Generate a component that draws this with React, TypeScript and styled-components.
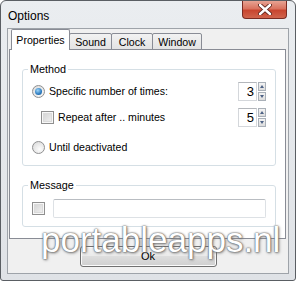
import React from "react";
import styled, { createGlobalStyle } from "styled-components";

const GlobalStyle = createGlobalStyle`
    body {
        margin: 0;
        background: #ffffff;
        font-family: "Liberation Sans", Arial, sans-serif;
    }
`;

const Window = styled.div`
    position: relative;
    width: 296px;
    height: 281px;
    box-sizing: border-box;
    border: 1px solid #5a5e63;
    border-radius: 6px 6px 3px 3px;
    background: linear-gradient(#eaedf0, #dfe2e6);
    display: flex;
    flex-direction: column;
    padding: 0 6px 6px 6px;
    overflow: hidden;
`;

const TitleBar = styled.div`
    height: 27px;
    display: flex;
    justify-content: space-between;
    align-items: flex-start;
`;

const Title = styled.span`
    font-size: 12px;
    line-height: 15px;
    padding: 8px 0 0 1px;
    color: #000;
`;

const CloseButton = styled.div`
    width: 45px;
    height: 18px;
    margin-right: 2px;
    box-sizing: border-box;
    border: 1px solid #7a2b22;
    border-top: none;
    border-radius: 0 0 4px 4px;
    background: linear-gradient(#e7a393 0%, #d9735f 45%, #c8452f 55%, #d0644c 100%);
    display: flex;
    align-items: center;
    justify-content: center;
`;

const Client = styled.div`
    flex: 1;
    display: flex;
    flex-direction: column;
    background: #f0f0f0;
    border: 1px solid #9ea3a9;
`;

const TabRow = styled.div`
    display: flex;
    align-items: flex-end;
    height: 21px;
    padding-left: 3px;
    position: relative;
    z-index: 1;
`;

const Tab = styled.div<{ $active?: boolean; $w: number }>`
    box-sizing: border-box;
    width: ${(p) => p.$w}px;
    height: ${(p) => (p.$active ? 21 : 17)}px;
    margin-left: ${(p) => (p.$active ? 0 : -1)}px;
    border: 1px solid #898c95;
    border-bottom: ${(p) => (p.$active ? "none" : "1px solid #898c95")};
    border-radius: 2px 2px 0 0;
    background: ${(p) => (p.$active ? "#ffffff" : "linear-gradient(#f2f2f2, #e3e3e3)")};
    font-size: 10.6px;
    line-height: 15px;
    text-align: center;
    padding-top: ${(p) => (p.$active ? 3 : 1)}px;
    color: #000;
`;

const Panel = styled.div`
    box-sizing: border-box;
    height: 190px;
    margin: -1px 2px 0 1px;
    border: 1px solid #898c95;
    background: #ffffff;
    padding: 13px 9px 0 12px;
    display: flex;
    flex-direction: column;
    gap: 13px;
`;

const Group = styled.fieldset<{ $pt: number; $pb: number }>`
    margin: 0;
    padding: ${(p) => p.$pt}px 9px ${(p) => p.$pb}px 9px;
    border: 1px solid #d5dfe5;
    border-radius: 3px;
    display: flex;
    flex-direction: column;
    min-width: 0;
`;

const Legend = styled.legend`
    font-size: 10.8px;
    line-height: 13px;
    padding: 0 2px;
    margin-left: -4px;
    color: #000;
`;

const Row = styled.div<{ $indent?: number; $mt?: number }>`
    height: 20px;
    display: flex;
    align-items: center;
    margin-left: ${(p) => p.$indent ?? 0}px;
    margin-top: ${(p) => p.$mt ?? 0}px;
    font-size: 10.6px;
    color: #000;
`;

const Label = styled.span`
    margin-left: 4px;
    flex: 1;
`;

const Radio = styled.span<{ $checked?: boolean }>`
    position: relative;
    width: 13px;
    height: 13px;
    box-sizing: border-box;
    border-radius: 50%;
    border: 1px solid #8f9091;
    background: radial-gradient(circle at 60% 65%, #fdfdfd, #d6d6d6);
    flex-shrink: 0;
    &::after {
        content: "";
        display: ${(p) => (p.$checked ? "block" : "none")};
        position: absolute;
        left: 2px;
        top: 2px;
        width: 7px;
        height: 7px;
        border-radius: 50%;
        background: radial-gradient(circle at 40% 35%, #9fd6f9, #2c7bc0 60%, #164f82);
    }
`;

const Check = styled.span`
    width: 13px;
    height: 13px;
    box-sizing: border-box;
    border: 1px solid #8f8f8f;
    background: linear-gradient(135deg, #cfcfcf, #f4f4f4);
    box-shadow: inset 0 0 0 1px #f7f7f7, inset 0 0 0 2px #dadada;
    flex-shrink: 0;
`;

const Spinner = styled.div`
    display: flex;
    height: 19px;
`;

const SpinBox = styled.div`
    width: 19px;
    box-sizing: border-box;
    border: 1px solid #d4d7db;
    border-top-color: #b3b6bb;
    text-align: right;
    padding-right: 2px;
    font-size: 13px;
    line-height: 17px;
    background: #fff;
`;

const SpinButtons = styled.div`
    width: 8px;
    display: flex;
    flex-direction: column;
    margin-left: 1px;
    gap: 1px;
`;

const Arrow = styled.div<{ $down?: boolean }>`
    flex: 1;
    box-sizing: border-box;
    border: 1px solid #a9b0b8;
    background: linear-gradient(#f4f4f4, #dcdcdc);
    display: flex;
    align-items: center;
    justify-content: center;
    &::after {
        content: "";
        border-left: 2px solid transparent;
        border-right: 2px solid transparent;
        ${(p) => (p.$down ? "border-top: 3px solid #4d6185;" : "border-bottom: 3px solid #4d6185;")}
    }
`;

const TextBox = styled.div`
    flex: 1;
    height: 19px;
    margin-left: 8px;
    box-sizing: border-box;
    border: 1px solid #dde1e5;
    border-top-color: #b9bdc2;
    border-radius: 2px;
    background: #fff;
`;

const Footer = styled.div`
    flex: 1;
    display: flex;
    justify-content: center;
    padding-top: 7px;
`;

const Button = styled.div`
    width: 137px;
    height: 21px;
    box-sizing: border-box;
    border: 1px solid #707070;
    border-radius: 3px;
    background: linear-gradient(#f2f2f2 0%, #ebebeb 45%, #dddddd 50%, #cfcfcf 100%);
    box-shadow: inset 0 0 0 1px #fbfbfb;
    font-size: 11px;
    line-height: 19px;
    text-align: center;
    color: #000;
`;

const Watermark = styled.div`
    position: absolute;
    left: 40px;
    top: 217px;
    font-family: "Liberation Sans", Arial, sans-serif;
    font-size: 35px;
    line-height: 44px;
    color: #ffffff;
    text-shadow: 0 0 2px #5e5e5e, 1px 1px 3px #7a7a7a, 0 0 1px #666;
    pointer-events: none;
`;

const NumberSpinner: React.FC<{ value: number }> = ({ value }) => (
    <Spinner>
        <SpinBox>{value}</SpinBox>
        <SpinButtons>
            <Arrow />
            <Arrow $down />
        </SpinButtons>
    </Spinner>
);

export default function App() {
    return (
        <>
            <GlobalStyle />
            <Window>
                <TitleBar>
                    <Title>Options</Title>
                    <CloseButton>
                        <svg width="14" height="11" viewBox="0 0 14 11">
                            <path d="M2 1 L12 10 M12 1 L2 10" stroke="#5a2018" strokeWidth="4.2" strokeLinecap="round" />
                            <path d="M2 1 L12 10 M12 1 L2 10" stroke="#ffffff" strokeWidth="2.4" strokeLinecap="round" />
                        </svg>
                    </CloseButton>
                </TitleBar>
                <Client>
                    <TabRow>
                        <Tab $active $w={59}>Properties</Tab>
                        <Tab $w={43}>Sound</Tab>
                        <Tab $w={42}>Clock</Tab>
                        <Tab $w={50}>Window</Tab>
                    </TabRow>
                    <Panel>
                        <Group $pt={5} $pb={8}>
                            <Legend>Method</Legend>
                            <Row>
                                <Radio $checked />
                                <Label>Specific number of times:</Label>
                                <NumberSpinner value={3} />
                            </Row>
                            <Row $indent={9} $mt={6}>
                                <Check />
                                <Label>Repeat after .. minutes</Label>
                                <NumberSpinner value={5} />
                            </Row>
                            <Row $mt={10}>
                                <Radio />
                                <Label>Until deactivated</Label>
                            </Row>
                        </Group>
                        <Group $pt={6} $pb={8}>
                            <Legend>Message</Legend>
                            <Row>
                                <Check />
                                <TextBox />
                            </Row>
                        </Group>
                    </Panel>
                    <Footer>
                        <Button>Ok</Button>
                    </Footer>
                </Client>
                <Watermark>portableapps.nl</Watermark>
            </Window>
        </>
    );
}
